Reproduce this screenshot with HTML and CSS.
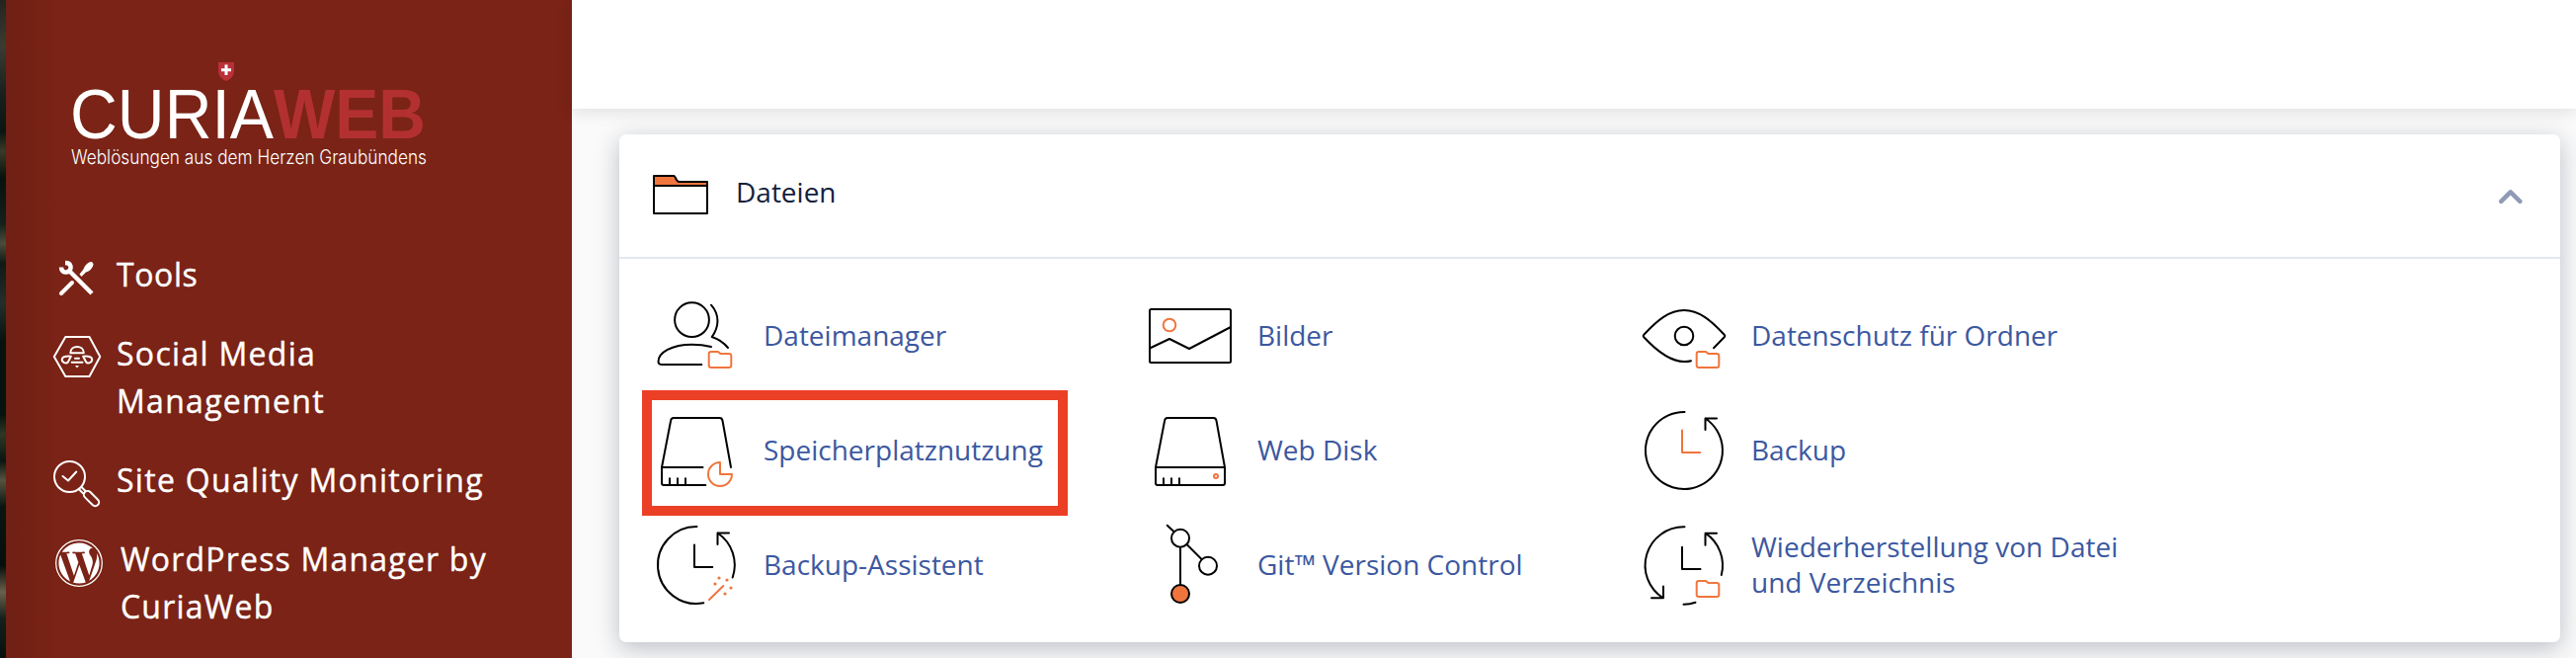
FILE: index.html
```html
<!DOCTYPE html>
<html lang="de">
<head>
    <meta charset="UTF-8">
    <meta name="viewport" content="width=device-width, initial-scale=1.0">
    <title>CuriaWeb - Dateien</title>
    <link rel="stylesheet" href="styles.css">
</head>
<body>
    <!-- shared icon parts -->
    <svg class="defs" width="0" height="0">
        <symbol id="mini-folder" viewBox="0 0 84 84">
            <path class="accent" d="M57 58h6.5c1.500 0 2 2 3.500 2H75c1.500 0 2.300.8 2.300 2.300v9.400c0 1.500-.8 2.300-2.300 2.300H57c-1.500 0-2.300-.8-2.300-2.300V60.300c0-1.500.8-2.300 2.300-2.300z"/>
        </symbol>
    </svg>

    <div class="photo-strip"></div>
    <div class="sidebar">
        <svg class="logo" width="364" height="116" viewBox="0 0 364 116">
            <path class="shield" d="M149 3h16v8c0 6-3 9-8 11-5-2-8-5-8-11z"/>
            <path class="shield-cross" d="M157 5.500v10.500M152 10.800h10"/>
            <text class="logo-curia" x="-1" y="80" textLength="206" lengthAdjust="spacingAndGlyphs">CURIA</text>
            <text class="logo-web" x="205" y="80" textLength="154" lengthAdjust="spacingAndGlyphs">WEB</text>
            <text class="logo-claim" x="0" y="106" textLength="360" lengthAdjust="spacingAndGlyphs">Weblösungen aus dem Herzen Graubündens</text>
        </svg>
        <div class="nav">
            <a class="nav-item" href="#">
                <svg class="nav-icon tools" width="36" height="36" viewBox="0 0 36 36">
                    <path class="wrench" d="M2 6.500C2 10 4.500 12 7.500 11.500S12 8 11.500 5.500 9 2 6 2M10.500 10.500L33 33"/>
                    <path class="driver" d="M2 33L13 22"/>
                    <path class="solid" d="M20.500 13.500l4-5C26 4 30 .5 33 1l1.500 2c0 3-3 7.500-7.500 8.500l-4.500 4.500z"/>
                </svg>
                <span class="tight">Tools</span>
            </a>
            <a class="nav-item" href="#">
                <svg class="nav-icon bee" width="48" height="42" viewBox="0 0 48 42">
                    <path d="M12.300 1h24.200L47.300 21 36.500 41H12.300L.8 21z"/>
                    <path d="M17.300 17.300c0-8.500 13.500-8.500 13.500 0zM17.800 20.700c-5-.7-9 .3-9 3.300s4.200 4.500 6 2.500zM30.200 20.700c5-.7 9 .3 9 3.300s-4.200 4.500-6 2.500zM22 22.700h4M18.700 26.700H29.500"/>
                    <path class="solid" d="M22 30h4l-2 2.500z"/>
                </svg>
                <span>Social Media Management</span>
            </a>
            <a class="nav-item" href="#">
                <svg class="nav-icon" width="48" height="48" viewBox="0 0 48 48">
                    <circle cx="16.500" cy="16.500" r="15.500"/>
                    <path d="M9.500 16l5.500 4.500 8.300-9M26 29.300l4 4M28.500 27l4 4"/>
                    <rect x="-3.800" y="0" width="7.600" height="18.500" rx="3.800" transform="translate(32 32) rotate(-45)"/>
                </svg>
                <span>Site Quality Monitoring</span>
            </a>
            <a class="nav-item wp" href="#">
                <svg class="nav-icon" width="48" height="48" viewBox="8 8 496 496">
                    <circle class="wp-ring" cx="256" cy="256" r="241"/>
                    <path class="solid" d="M61.700 169.400l101.500 278C92.200 413 43.300 340.200 43.300 256c0-30.900 6.600-60.100 18.400-86.600zm337.900 75.900c0-26.300-9.400-44.500-17.500-58.700-10.800-17.500-20.900-32.400-20.900-49.900 0-19.600 14.800-37.800 35.700-37.800.9 0 1.800.1 2.800.2-37.900-34.700-88.300-55.900-143.700-55.900-74.300 0-139.700 38.100-177.800 95.900 5 .2 9.700.3 13.700.3 22.200 0 56.700-2.700 56.700-2.700 11.500-.7 12.800 16.200 1.400 17.500 0 0-11.500 1.300-24.300 2l77.500 230.400L249.800 247l-33.100-90.800c-11.500-.7-22.300-2-22.300-2-11.500-.7-10.100-18.200 1.300-17.500 0 0 35.100 2.700 56 2.700 22.200 0 56.700-2.700 56.700-2.700 11.500-.7 12.800 16.200 1.400 17.500 0 0-11.500 1.300-24.300 2l76.900 228.700 21.200-70.900c9-29.400 16-50.500 16-68.700zm-139.900 29.300l-63.800 185.500c19.100 5.600 39.200 8.700 60.100 8.700 24.800 0 48.500-4.300 70.600-12.100-.6-.9-1.100-1.900-1.500-2.900l-65.400-179.200zm183-120.700c.9 6.800 1.400 14 1.400 21.900 0 21.600-4 45.800-16.200 76.200l-65 187.900C426.200 403 468.700 334.500 468.700 256c0-37-9.400-71.800-26-102.100z"/>
                </svg>
                <span>WordPress Manager by CuriaWeb</span>
            </a>
        </div>
    </div>

    <div class="main">
        <div class="topbar"></div>
        <div class="card">
            <div class="card-header">
                <svg class="folder" width="56" height="40" viewBox="0 0 56 40">
                    <path class="folder-tab" d="M1 11V1h20.500l1.500 2 1 2.300L26 7h29v4z"/>
                    <path d="M1 11h54v28H1z"/>
                </svg>
                <h2>Dateien</h2>
                <svg class="chevron" width="24" height="16" viewBox="0 0 24 16">
                    <path d="M2.200 12.800L11.700 3.300l9.600 9.500"/>
                </svg>
            </div>
            <div class="items">
                <a class="item" href="#">
                    <svg class="icon" viewBox="0 0 84 84">
                        <circle cx="37.500" cy="25.700" r="17.400"/>
                        <path d="M57 10.700C66 21 65 33 57.700 43 64 45 69.500 48.500 74 54M57 53c-6-1.500-12-2.300-19.500-2.300C17 50.700 3.500 59 3.500 68c0 2 1.500 3 4 3h39.800"/>
                        <use href="#mini-folder"/>
                    </svg>
                    <span>Dateimanager</span>
                </a>
                <a class="item" href="#">
                    <svg class="icon" viewBox="0 0 84 84">
                        <rect x="1" y="15" width="82" height="54" rx="1.500"/>
                        <path d="M1 54.500L21 45l20 10 42-22"/>
                        <circle class="accent" cx="21" cy="31" r="6.300"/>
                    </svg>
                    <span>Bilder</span>
                </a>
                <a class="item" href="#">
                    <svg class="icon" viewBox="0 0 84 84">
                        <path d="M72 54.300l10.700-11c.8-.8.8-1.800 0-2.600C69 26 57 16 42 16S15 26 1.300 40.700c-.8.8-.8 1.800 0 2.600C15 58 28 68 42 68c2.500 0 5-.2 7-.8"/>
                        <circle cx="42" cy="42" r="9.300"/>
                        <use href="#mini-folder"/>
                    </svg>
                    <span>Datenschutz für Ordner</span>
                </a>
                <a class="item highlight" href="#">
                    <svg class="icon" viewBox="0 0 84 84">
                        <path d="M77 59L68.500 11.700C68.100 9.800 67.400 9 65.500 9H19c-1.900 0-2.600.8-2.900 2.700L7 59v16c0 1.300.7 2 2 2h42.300M7 59h41.500M15 77v-6.700M23 77v-6.700M31 77v-6.700"/>
                        <path class="accent" d="M66 54a12 12 0 1 0 12 12H66z"/>
                    </svg>
                    <span>Speicherplatznutzung</span>
                </a>
                <a class="item" href="#">
                    <svg class="icon" viewBox="0 0 84 84">
                        <path d="M77 59L68.500 11.700C68.100 9.800 67.400 9 65.500 9H19c-1.900 0-2.600.8-2.900 2.700L7 59v16c0 1.300.7 2 2 2h66c1.300 0 2-.7 2-2zM7 59h70M15 77v-6.700M23 77v-6.700M31 77v-6.700"/>
                        <circle class="accent" cx="68" cy="68" r="2"/>
                    </svg>
                    <span>Web Disk</span>
                </a>
                <a class="item" href="#">
                    <svg class="icon" viewBox="0 0 84 84">
                        <path d="M42.500 3a39 39 0 1 0 21 6.500M75 9.500H63.500V21"/>
                        <path class="accent" d="M40 21.500V44h18.300"/>
                    </svg>
                    <span>Backup</span>
                </a>
                <a class="item" href="#">
                    <svg class="icon" viewBox="0 0 84 84">
                        <path d="M42.500 3a39 39 0 1 0 6.800 77.300M78.700 54.500A39 39 0 0 0 63.500 9.500M75 9.500H63.500V21M40 21.500V44h18.300"/>
                        <path class="accent" d="M55 77l14.300-14"/>
                        <g class="sparks">
                            <circle cx="65" cy="55" r="1.600"/>
                            <circle cx="73" cy="57" r="1.600"/>
                            <circle cx="61" cy="61" r="1.600"/>
                            <circle cx="77" cy="65" r="1.600"/>
                            <circle cx="71" cy="71" r="1.600"/>
                        </g>
                    </svg>
                    <span>Backup-Assistent</span>
                </a>
                <a class="item" href="#">
                    <svg class="icon" viewBox="0 0 84 84">
                        <path d="M18.700 1.700l7 6.600M38.500 21l15 15M32 24v38"/>
                        <circle cx="32" cy="14.700" r="9"/>
                        <circle cx="60" cy="42.700" r="9"/>
                        <circle class="filled" cx="32" cy="71" r="9"/>
                    </svg>
                    <span>Git™ Version Control</span>
                </a>
                <a class="item" href="#">
                    <svg class="icon" viewBox="0 0 84 84">
                        <path d="M42.500 3.300A39 39 0 0 0 20.800 75.300M9 75.300h12V63.500M75 9.700H63.500v12M79.800 52A39 39 0 0 0 63.500 9.700M40 23.700V46h18.500M41.500 81.700c4.500 0 8.500-.7 12-1.900"/>
                        <use href="#mini-folder"/>
                    </svg>
                    <span>Wiederherstellung von Datei und Verzeichnis</span>
                </a>
            </div>
        </div>
    </div>
</body>
</html>
```
FILE: styles.css
```css
*, *::after { margin: 0; padding: 0; box-sizing: border-box; }
body {
    display: flex;
    height: 666px;
    overflow: hidden;
    background: #fafafa;
    font-family: "Open Sans", "Noto Sans", sans-serif;
}
a { text-decoration: none; }
svg { flex: none; fill: none; stroke-linecap: round; stroke-linejoin: round; overflow: visible; }
.defs { position: absolute; }

/* sliver of the page background photo */
.photo-strip {
    width: 6px;
    background: linear-gradient(#24241e, #3a3c33 7%, #1a211d 14%, #0b1512 20%, #383b27 23%, #07120e 27%, #15201b 34%, #4a4c3c 37%, #101915 40%, #252e2b 46%, #07120f 52%, #07130f 63%, #2f3823 66%, #0a1512 70%, #55533f 73%, #0a1512 77%, #070f0d 86%, #6a604c 90%, #14201c 94%, #08100e);
}

/* Sidebar */
.sidebar {
    width: 573px;
    padding: 60px 48px 0;
    background: linear-gradient(90deg, #6f2014, #7a2316 52px);
}
.logo { display: block; margin-left: 18px; }
.logo-curia, .logo-web { font-family: "Liberation Sans", sans-serif; font-size: 71px; }
.logo-curia { fill: #fff; }
.logo-web { fill: #b33031; font-weight: bold; }
.logo-claim { fill: #fff; font-family: Inter, "Liberation Sans", sans-serif; font-size: 19.500px; font-weight: 300; }
.shield { fill: #b93038; }
.shield-cross { stroke: #fff; stroke-width: 3; stroke-linecap: butt; }
.nav {
    display: flex;
    flex-direction: column;
    gap: 32px;
    margin-top: 78px;
}
.nav-item {
    display: flex;
    align-items: flex-start;
    gap: 16px;
    color: #fff;
    font-size: 32px;
    line-height: 48px;
    letter-spacing: 1.300px;
    -webkit-text-stroke: 0.400px #fff;
}
.nav-item span { max-width: 385px; }
.nav-item .tight { letter-spacing: 0.600px; }
.nav-item:nth-child(2) span { max-width: 300px; }
.nav-icon { margin: 4px 0 -4px; stroke: #fff; stroke-width: 2; }
.nav-icon.tools { margin: 10px 6px 0; }
.nav-icon.bee { margin-top: 6px; }
.nav-item.wp { padding-left: 2px; gap: 18px; letter-spacing: 1.200px; }
.solid { fill: #fff; stroke: none; }
.wrench { stroke-width: 4.500; stroke-linecap: butt; }
.driver { stroke-width: 4; }
.wp-ring { stroke-width: 13; }

/* Main area */
.main { flex: 1; }
.topbar {
    height: 110px;
    background: #fff;
    box-shadow: 0 2px 16px rgba(0, 20, 10, 0.13);
}
.card {
    margin: 26px 16px 0 48px;
    height: 514px;
    background: #fff;
    border-radius: 7px;
    box-shadow: 0 6px 24px rgba(20, 35, 60, 0.28);
    position: relative;
}
.card-header {
    display: flex;
    align-items: center;
    height: 126px;
    padding: 0 38px 2px 34px;
    border-bottom: 2px solid #e4e8f2;
}
.folder { stroke: #000; stroke-width: 2; }
.folder-tab { fill: #f0753d; }
.card-header h2 {
    margin-left: 28px;
    padding-bottom: 7px;
    flex: 1;
    color: #14213d;
    font-size: 28px;
    font-weight: 400;
}
.chevron { margin-top: 4px; stroke: #8f9bb5; stroke-width: 4.500; }
.items {
    display: grid;
    grid-template-columns: repeat(3, 500px);
    grid-auto-rows: 116px;
    padding: 20px 0 0 36px;
}
.item {
    display: flex;
    align-items: center;
    gap: 26px;
    color: #3c58a0;
    font-size: 28px;
    line-height: 36px;
    position: relative;
}
.item span { max-width: 390px; padding-bottom: 2px; }
.icon { width: 84px; height: 84px; stroke: #000; stroke-width: 2; }
.accent { stroke: #f0753d; }
.filled { fill: #f0753d; }
.sparks { fill: #f0753d; stroke: none; }

/* red frame drawn over the current item */
.highlight::after {
    content: "";
    position: absolute;
    left: -13px;
    top: -3px;
    width: 431px;
    height: 127px;
    border: 10px solid #eb4025;
}
```
